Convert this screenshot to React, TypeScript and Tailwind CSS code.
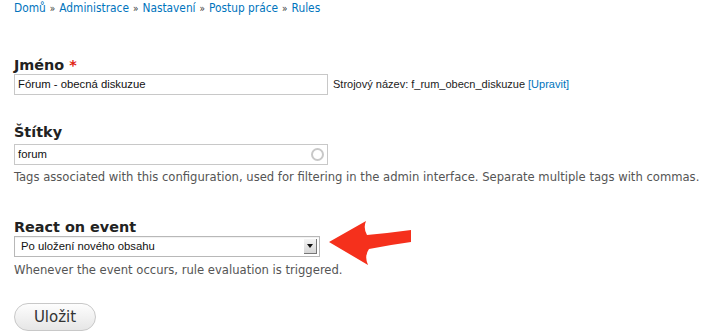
const crumbs = ["Domů", "Administrace", "Nastavení", "Postup práce", "Rules"];

function Arrow() {
    return (
        <svg width="82" height="44" viewBox="0 0 82 44" className="absolute left-[315px] -top-[15px]">
            <path
                d="M0 21 L37 0 Q34 7 38 14 Q60 12 82 9 L82 21 Q60 24 40 28 Q35 35 39 44 Z"
                fill="#f5301c"
            />
        </svg>
    );
}

export default function App() {
    return (
        <div className="w-[704px] h-[336px] bg-white px-[14px] pt-0 font-['DejaVu_Sans_Condensed','DejaVu_Sans',sans-serif] text-[12.9px] text-[#333]">
            <div className="flex items-center h-[18px] text-[#0074bd] text-[11.8px]">
                {crumbs.map((c, i) => (
                    <span key={c}>
                        {i > 0 && <span className="text-[#333] text-[10px] mx-[4px]">»</span>}
                        {c}
                    </span>
                ))}
            </div>

            <div className="mt-[39px]">
                <div className="font-bold font-['DejaVu_Sans',sans-serif] text-[14.4px] text-[#222] h-[16px] leading-[16px]">
                    Jméno <span className="text-[#e02010]">*</span>
                </div>
                <div className="flex items-center mt-[1px]">
                    <div className="w-[314px] h-[21px] border border-[#c8c8c8] pl-[3px] flex items-center font-['Liberation_Sans',sans-serif] text-[11.3px] text-[#111]">
                        Fórum - obecná diskuzue
                    </div>
                    <span className="ml-[5px] font-['Liberation_Sans',sans-serif] text-[11px] text-[#222]">
                        Strojový název: f_rum_obecn_diskuzue <span className="text-[#0074bd]">[Upravit]</span>
                    </span>
                </div>
            </div>

            <div className="mt-[29px]">
                <div className="font-bold font-['DejaVu_Sans',sans-serif] text-[14.4px] text-[#222] h-[16px] leading-[16px]">Štítky</div>
                <div className="relative mt-[4px] w-[314px] h-[21px] border border-[#c8c8c8] pl-[3px] flex items-center font-['Liberation_Sans',sans-serif] text-[11.3px] text-[#111]">
                    forum
                    <span className="absolute right-[3px] top-[3px] w-[13px] h-[13px] rounded-full border-2 border-[#c8c8c8]" />
                </div>
                <div className="mt-[3px] text-[#555] leading-[17px] whitespace-nowrap">
                    Tags associated with this configuration, used for filtering in the admin interface. Separate multiple tags with commas.
                </div>
            </div>

            <div className="mt-[34px]">
                <div className="font-bold font-['DejaVu_Sans',sans-serif] text-[14.4px] text-[#222] h-[16px] leading-[16px]">React on event</div>
                <div className="relative mt-[1px]">
                    <div className="w-[306px] h-[21px] border border-[#b8b8b8] bg-white pl-[6px] pr-[2px] flex items-center justify-between font-['Liberation_Sans',sans-serif] text-[11.3px] text-[#111] shadow-[inset_0_1px_1px_rgba(0,0,0,0.06)]">
                        Po uložení nového obsahu
                        <span className="w-[13px] h-[15px] bg-gradient-to-b from-[#f4f4f4] to-[#d6d6d6] border-r border-b border-[#777] flex items-center justify-center">
                            <span className="w-0 h-0 border-l-[3px] border-r-[3px] border-t-[4px] border-l-transparent border-r-transparent border-t-[#111]" />
                        </span>
                    </div>
                    <Arrow />
                </div>
                <div className="mt-[4px] text-[#555] leading-[17px]">
                    Whenever the event occurs, rule evaluation is triggered.
                </div>
            </div>

            <button className="mt-[25px] w-[82px] h-[28px] rounded-full border border-[#c8c8c8] bg-gradient-to-b from-[#fdfdfd] to-[#e6e6e6] text-[15px] text-[#333] font-['DejaVu_Sans',sans-serif]">
                Uložit
            </button>
        </div>
    );
}
